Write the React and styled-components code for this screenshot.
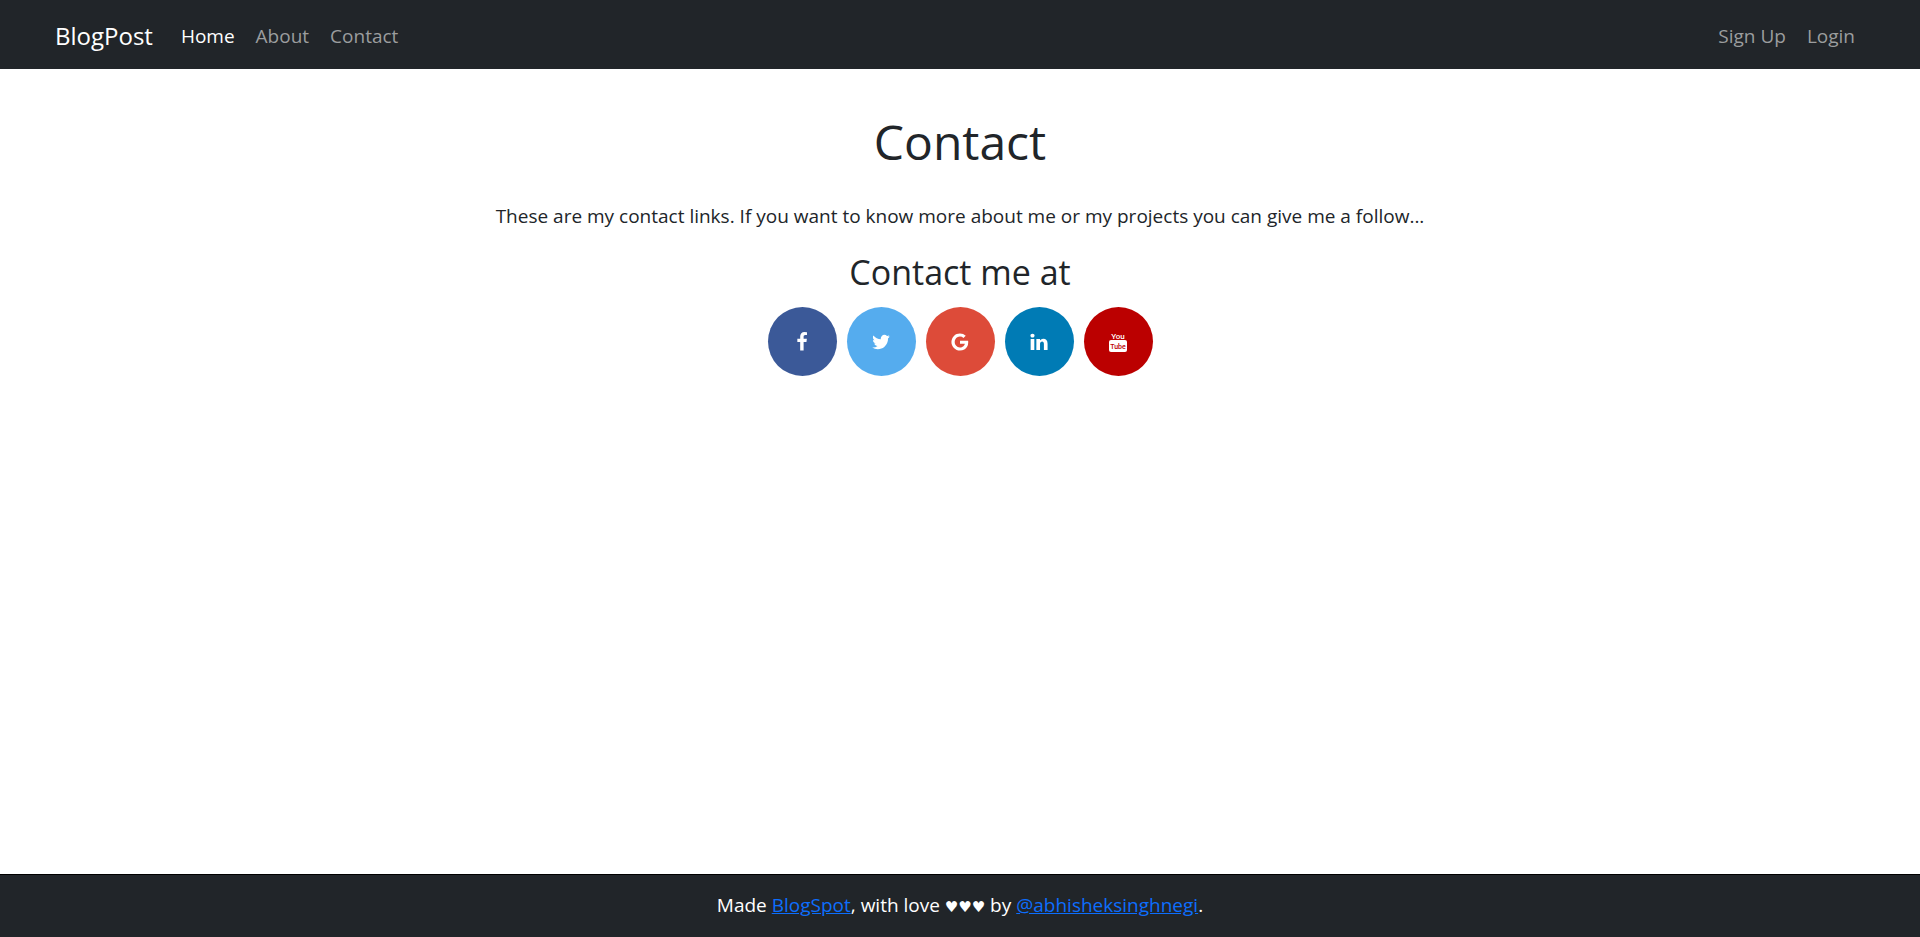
import React from "react";
import styled, { createGlobalStyle } from "styled-components";

const GlobalStyle = createGlobalStyle`
  *, *::before, *::after { box-sizing: border-box; }
  body {
    margin: 0;
    background: #fff;
    color: #212529;
    font-family: "Segoe UI", "Open Sans", "Noto Sans", "DejaVu Sans", sans-serif;
    font-size: 19px;
    line-height: 30px;
  }
`;

const Page = styled.div`
  display: flex;
  flex-direction: column;
  min-height: 100vh;
`;

const Navbar = styled.nav`
  display: flex;
  align-items: center;
  min-height: 69px;
  padding: 2px 55px 0;
  background: #212529;
`;

const Brand = styled.a`
  margin-right: 28px;
  color: #fff;
  font-size: 24px;
  text-decoration: none;
`;

const NavList = styled.ul`
  display: flex;
  gap: 21px;
  margin: 0;
  margin-left: ${(p) => (p.$end ? "auto" : "0")};
  padding: 0;
  padding-right: ${(p) => (p.$end ? "10px" : "0")};
  list-style: none;
`;

const NavLink = styled.a`
  color: ${(p) => (p.$active ? "#fff" : "#9b9d9e")};
  text-decoration: none;
`;

const Main = styled.main`
  flex: 1;
  display: flex;
  flex-direction: column;
  align-items: center;
  padding-top: 43px;
  text-align: center;
`;

const Title = styled.h1`
  margin: 0 0 29px;
  font-size: 48px;
  font-weight: 400;
  line-height: 60px;
`;

const Intro = styled.p`
  margin: 0 0 20px;
`;

const Subtitle = styled.h3`
  margin: 0 0 14px;
  font-size: 34px;
  font-weight: 400;
  line-height: 42px;
`;

const SocialRow = styled.div`
  display: flex;
  gap: 10px;
`;

const SocialLink = styled.a`
  display: flex;
  align-items: center;
  justify-content: center;
  width: 69px;
  height: 69px;
  border-radius: 50%;
  background: ${(p) => p.$color};
  color: #fff;
`;

const Icon = styled.svg`
  width: 20px;
  height: 20px;
  fill: currentColor;
`;

const LogoText = styled.text`
  font-family: Roboto, sans-serif;
  font-size: ${(p) => p.$size}px;
  font-weight: 500;
  text-anchor: middle;
`;

const Footer = styled.footer`
  padding: 15px 20px 17px;
  border-top: 1px solid #000;
  background: #212529;
  color: #fff;
  text-align: center;
`;

const Hearts = styled.span`
  font-family: "DejaVu Sans", sans-serif;
  font-size: 15px;
  line-height: 1;
`;

const FooterLink = styled.a`
  color: #0d6efd;
  text-decoration: underline;
`;

const SOCIALS = [
  {
    name: "Facebook",
    color: "#3b5998",
    path: "M1343 12v264h-157q-86 0-116 36t-30 108v189h293l-39 296h-254v759h-306v-759h-255v-296h255v-218q0-186 104-288.5t277-102.5q147 0 228 12z",
  },
  {
    name: "Twitter",
    color: "#55acee",
    path: "M1684 408q-67 98-162 167 1 14 1 42 0 130-38 259.5t-115.5 248.5-184.5 210.5-258 146-323 54.5q-271 0-496-145 35 4 78 4 225 0 401-138-105-2-188-64.5t-114-159.5q33 5 61 5 43 0 85-11-112-23-185.5-111.5t-73.5-205.5v-4q68 38 146 41-66-44-105-115t-39-154q0-88 44-163 121 149 294.5 238.5t371.5 99.5q-8-38-8-74 0-134 94.5-228.5t228.5-94.5q140 0 236 102 109-21 205-78-37 115-142 178 93-10 186-50z",
  },
  {
    name: "Google",
    color: "#dd4b39",
    path: "M896 786h725q12 67 12 128 0 217-91 387.5t-259.5 266.5-386.5 96q-157 0-299-60.5t-245-163.5-163.5-245-60.5-299 60.5-299 163.5-245 245-163.5 299-60.5q300 0 515 201l-209 201q-123-119-306-119-129 0-238.5 65t-173.5 176.5-64 243.5 64 243.5 173.5 176.5 238.5 65q87 0 160-24t120-60 82-82 51.5-87 22.5-78h-436v-264z",
  },
  {
    name: "LinkedIn",
    color: "#007bb5",
    path: "M477 625v991h-330v-991h330zm21-306q1 73-50.5 122t-135.5 49h-2q-82 0-132-49t-50-122q0-74 51.5-122.5t134.5-48.5 133 48.5 51 122.5zm1166 729v568h-329v-530q0-105-40.5-164.5t-126.5-59.5q-63 0-105.5 34.5t-63.5 85.5q-11 30-11 81v553h-329q2-399 2-647t-1-296l-1-48h329v144h-2q20-32 41-56t56.5-52 87-43.5 114.5-15.5q171 0 275 113.5t104 332.5z",
  },
  { name: "YouTube", color: "#bb0000" },
];

function YouTubeIcon() {
  return (
    <Icon viewBox="0 0 20 20" aria-hidden="true">
      <LogoText x="10" y="7" $size={8}>You</LogoText>
      <rect x="1" y="8" width="18" height="12" rx="2" />
      <LogoText x="10" y="17" $size={7} fill="#bb0000">Tube</LogoText>
    </Icon>
  );
}

export default function App() {
  return (
    <>
      <GlobalStyle />
      <Page>
        <Navbar>
          <Brand href="#">BlogPost</Brand>
          <NavList>
            <li><NavLink href="#" $active>Home</NavLink></li>
            <li><NavLink href="#">About</NavLink></li>
            <li><NavLink href="#">Contact</NavLink></li>
          </NavList>
          <NavList $end>
            <li><NavLink href="#">Sign Up</NavLink></li>
            <li><NavLink href="#">Login</NavLink></li>
          </NavList>
        </Navbar>
        <Main>
          <Title>Contact</Title>
          <Intro>
            These are my contact links. If you want to know more about me or my
            projects you can give me a follow...
          </Intro>
          <Subtitle>Contact me at</Subtitle>
          <SocialRow>
            {SOCIALS.map((s) => (
              <SocialLink key={s.name} href="#" aria-label={s.name} $color={s.color}>
                {s.path ? (
                  <Icon viewBox="0 0 1792 1792" aria-hidden="true">
                    <path d={s.path} />
                  </Icon>
                ) : (
                  <YouTubeIcon />
                )}
              </SocialLink>
            ))}
          </SocialRow>
        </Main>
        <Footer>
          Made <FooterLink href="#">BlogSpot</FooterLink>, with love{" "}
          <Hearts>♥♥♥</Hearts> by{" "}
          <FooterLink href="#">@abhisheksinghnegi</FooterLink>.
        </Footer>
      </Page>
    </>
  );
}
